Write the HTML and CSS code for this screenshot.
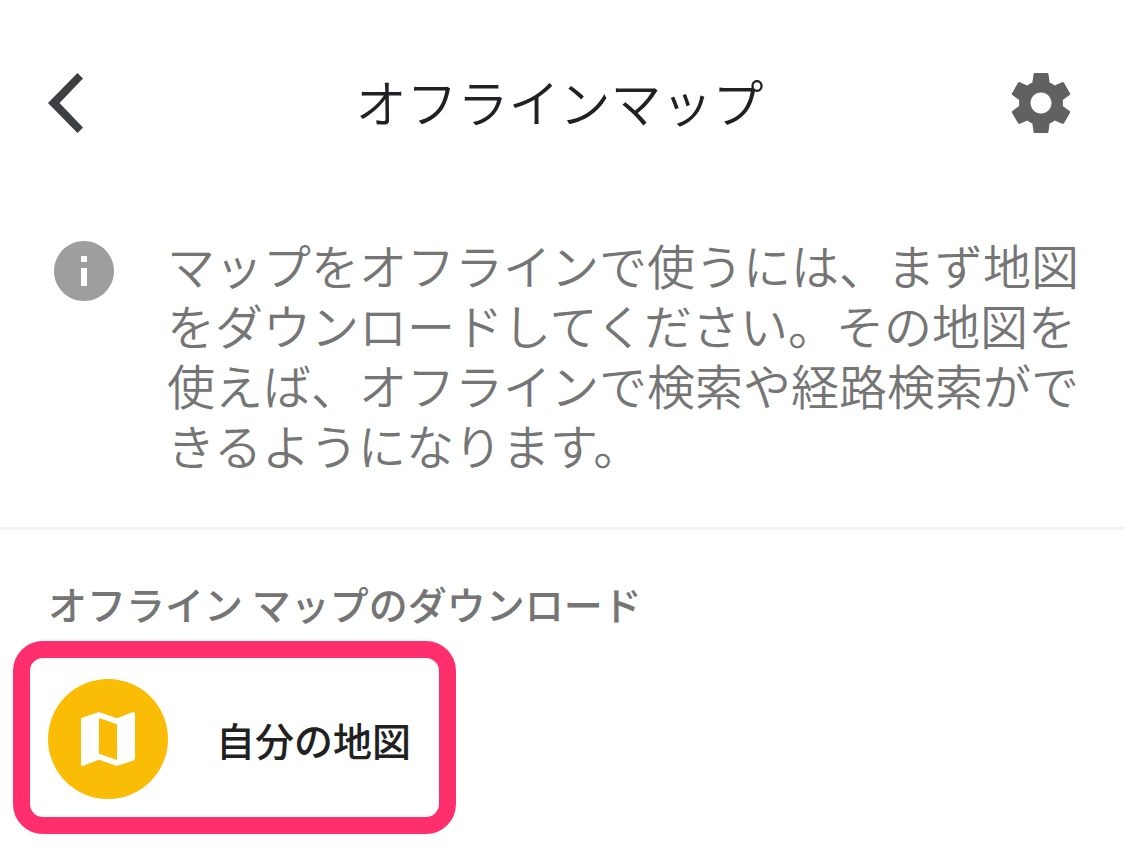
FILE: index.html
```
<!DOCTYPE html>
<html lang="ja">
<head>
    <meta charset="UTF-8">
    <meta name="viewport" content="width=device-width, initial-scale=1.0">
    <title>オフラインマップ</title>
    <link rel="stylesheet" href="styles.css">
</head>
<body>
    <header class="header">
        <button type="button" class="icon-button" aria-label="戻る">
            <svg class="back-icon" viewBox="0 0 36 60" fill="#3c4043">
                <path d="M29.5 0L35 5.5 11.5 30 35 54.5 29.5 60 0 30z"/>
            </svg>
        </button>
        <h1>オフラインマップ</h1>
        <button type="button" class="icon-button" aria-label="設定">
            <svg class="gear-icon" viewBox="2 2 20 20" fill="#616161">
                <path d="M19.25 12.98c.04-.32.07-.64.07-.98s-.03-.66-.07-.98l2.29-1.65c.19-.15.24-.42.12-.64l-2-3.46c-.12-.22-.39-.3-.61-.22l-2.49 1.1c-.52-.4-1.08-.73-1.69-.98l-.38-2.75C14.46 2.18 14.25 2 14 2h-4c-.25 0-.46.18-.49.42l-.38 2.75c-.61.25-1.17.59-1.69.98l-2.49-1.1c-.23-.09-.49 0-.61.22l-2 3.46c-.13.22-.07.49.12.64l2.29 1.65c-.04.32-.07.65-.07.98s.03.66.07.98l-2.29 1.65c-.19.15-.24.42-.12.64l2 3.46c.12.22.39.3.61.22l2.49-1.1c.52.4 1.08.73 1.69.98l.38 2.75c.03.24.24.42.49.42h4c.25 0 .46-.18.49-.42l.38-2.75c.61-.25 1.17-.59 1.69-.98l2.49 1.1c.23.09.49 0 .61-.22l2-3.46c.12-.22.07-.49-.12-.64l-2.29-1.65zM12 15.5c-1.93 0-3.5-1.57-3.5-3.5s1.57-3.5 3.5-3.5 3.5 1.57 3.5 3.5-1.57 3.5-3.5 3.5z"/>
            </svg>
        </button>
    </header>
    <main>
        <section class="info">
            <svg class="info-icon" viewBox="2 2 20 20" fill="#9e9e9e">
                <path d="M12 2C6.48 2 2 6.48 2 12s4.48 10 10 10 10-4.48 10-10S17.52 2 12 2zm1 15h-2v-6h2v6zm0-8h-2V7h2v2z"/>
            </svg>
            <p>マップをオフラインで使うには、まず地図をダウンロードしてください。その地図を使えば、オフラインで検索や経路検索ができるようになります。</p>
        </section>
        <section class="downloads">
            <h2>オフライン マップのダウンロード</h2>
            <button type="button" class="map-item">
                <span class="map-badge">
                    <svg class="map-icon" viewBox="3 3 18 18" fill="#fff">
                        <path d="M20.5 3l-.16.03L15 5.1 9 3 3.36 4.9c-.21.07-.36.25-.36.48V20.5c0 .28.22.5.5.5l.16-.03L9 18.9l6 2.1 5.64-1.9c.21-.07.36-.25.36-.48V3.5c0-.28-.22-.5-.5-.5zM15 19l-6-2.11V5l6 2.11V19z"/>
                    </svg>
                </span>
                自分の地図
            </button>
        </section>
    </main>
</body>
</html>
```
FILE: styles.css
```
body {
    margin: 0;
    background: #fff;
    color: #202124;
    font-family: "Noto Sans CJK JP", sans-serif;
}
.header {
    display: flex;
    align-items: center;
    justify-content: space-between;
    height: 206px;
    padding: 0 54px 0 48px;
}
h1 {
    margin: 0;
    padding-bottom: 4px;
    font-size: 51px;
    line-height: 60px;
    font-weight: 350;
}
.icon-button {
    display: flex;
    width: 60px;
    padding: 0;
    border: none;
    background: none;
    cursor: pointer;
}
.back-icon {
    width: 36px;
    height: 60px;
}
.gear-icon,
.info-icon {
    flex: none;
    width: 60px;
    height: 60px;
}
.info {
    display: flex;
    align-items: flex-start;
    gap: 53px;
    padding: 28px 42px 53px 54px;
    border-bottom: 3px solid #f3f3f3;
}
.info-icon {
    margin-top: 7px;
}
.info p {
    margin: 0;
    color: #757575;
    font-size: 48px;
    line-height: 60px;
    font-weight: 350;
}
h2 {
    margin: 0;
    padding: 43px 48px 8px;
    color: #757575;
    font-size: 39px;
    line-height: 60px;
    font-weight: 500;
}
.map-item {
    display: flex;
    align-items: center;
    gap: 48px;
    margin: 0 13px 16px;
    padding: 21px 28px 18px 18px;
    border: 17px solid #ff2f6e;
    border-radius: 30px;
    background: #fff;
    color: #212121;
    font-family: inherit;
    font-size: 39px;
    line-height: 60px;
    font-weight: 500;
    cursor: pointer;
}
.map-badge {
    display: flex;
    align-items: center;
    justify-content: center;
    width: 120px;
    height: 120px;
    border-radius: 50%;
    background: #fbbc05;
}
.map-icon {
    width: 54px;
    height: 54px;
}
```
